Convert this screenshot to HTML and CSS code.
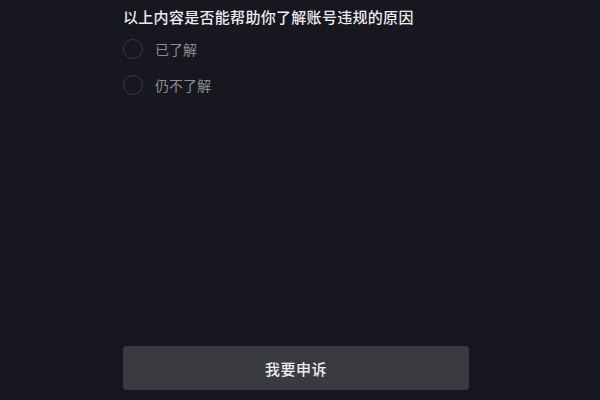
FILE: index.html
```html
<!DOCTYPE html>
<html lang="zh-CN">
<head>
  <meta charset="UTF-8" />
  <meta name="viewport" content="width=device-width, initial-scale=1.0"/>
  <title>账号违规申诉</title>
  <link rel="stylesheet" href="styles.css">
</head>
<body>

  <div class="page">
    <div class="survey">
      <h2 class="question">以上内容是否能帮助你了解账号违规的原因</h2>
      <label class="option">
        <span class="radio"></span>
        <span class="option-text">已了解</span>
      </label>
      <label class="option">
        <span class="radio"></span>
        <span class="option-text">仍不了解</span>
      </label>
    </div>

    <button class="appeal-btn">我要申诉</button>
  </div>

</body>
</html>
```

FILE: styles.css
```css
* {
  box-sizing: border-box;
}

html, body {
  margin: 0;
  height: 100%;
}

body {
  background: #17171f;
  color: #e9e9ec;
  font-family: "Noto Sans CJK SC", "Noto Sans", sans-serif;
}

.page {
  height: 100%;
  display: flex;
  flex-direction: column;
  padding: 0 131px 10px 123px;
}

.question {
  margin: 6px 0 0;
  font-size: 15px;
  font-weight: 500;
  line-height: 22px;
  letter-spacing: 0.3px;
  color: #ececef;
}

.option {
  display: flex;
  align-items: center;
  gap: 12px;
  height: 36px;
  margin-top: 0;
}

.survey .question + .option {
  margin-top: 3px;
}

.radio {
  width: 20px;
  height: 20px;
  border: 1.5px solid #3a3a43;
  border-radius: 50%;
}

.option-text {
  font-size: 14px;
  color: #8c8c93;
}

.appeal-btn {
  margin-top: auto;
  width: 100%;
  height: 44px;
  background: #3a3a41;
  border: none;
  border-radius: 4px;
  color: #ececef;
  font-family: inherit;
  font-size: 15px;
  font-weight: 500;
  letter-spacing: 0.5px;
  cursor: pointer;
}
```
